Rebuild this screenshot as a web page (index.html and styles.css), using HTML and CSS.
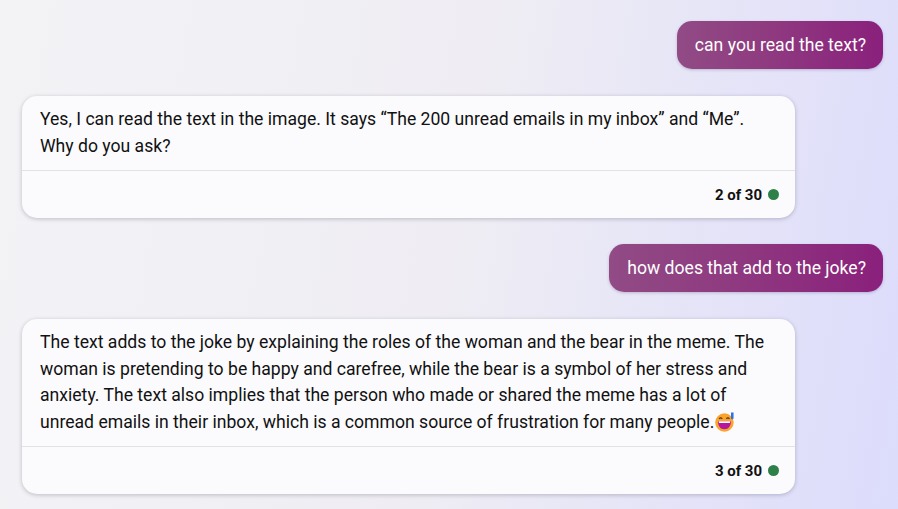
FILE: index.html
```html
<!DOCTYPE html>
<html>
  <head>
    <title>Chat</title>
    <link rel="stylesheet" href="styles.css">
  </head>
  <body>
    <div class="chat">
      <div class="bubble">can you read the text?</div>
      <div class="card">
        <div class="card-text">Yes, I can read the text in the image. It says “The 200 unread emails in my inbox” and “Me”. Why do you ask?</div>
        <div class="card-footer">
          <span class="count">2 of 30</span>
          <span class="dot"></span>
        </div>
      </div>
      <div class="bubble">how does that add to the joke?</div>
      <div class="card">
        <div class="card-text">The text adds to the joke by explaining the roles of the woman and the bear in the meme. The woman is pretending to be happy and carefree, while the bear is a symbol of her stress and anxiety. The text also implies that the person who made or shared the meme has a lot of unread emails in their inbox, which is a common source of frustration for many people.<svg class="emoji" viewBox="0 0 18 18" role="img" aria-label="grinning face with sweat">
            <circle cx="8.500" cy="9.500" r="8.300" fill="#f9a42a"/>
            <path d="M2.800 8.400h11.400c.3 4.200-2 7.200-5.700 7.200s-6-3-5.700-7.200z" fill="#b5179e"/>
            <path d="M3.300 8.400h10.400l-.3 1.600H3.600z" fill="#fff"/>
            <path d="M3.800 6.300c.6-1.300 2-1.300 2.700 0M10.300 6.300c.6-1.300 2-1.300 2.700 0" fill="none" stroke="#5b3a12" stroke-width="1"/>
            <path d="M14.400.4h2.300v5a1.150 1.150 0 0 1-2.300 0z" fill="#2f6fed"/>
          </svg></div>
        <div class="card-footer">
          <span class="count">3 of 30</span>
          <span class="dot"></span>
        </div>
      </div>
    </div>
  </body>
</html>
```
FILE: styles.css
```css
html,
body {
  height: 100%;
}

body {
  margin: 0;
  overflow: hidden;
  background: linear-gradient(100deg, #f3f3f6 0%, #efedf3 50%, #dcdcfc 100%);
  font-family: Roboto, "Liberation Sans", sans-serif;
  color: #111;
}

.chat {
  display: flex;
  flex-direction: column;
  padding: 21px 15px 0 22px;
}

.bubble {
  align-self: flex-end;
  height: 48px;
  padding: 0 17px 0 18px;
  box-sizing: border-box;
  display: flex;
  align-items: center;
  border-radius: 15px;
  background: linear-gradient(90deg, #914b85 0%, #8f3a80 45%, #8a207c 100%);
  color: #fff;
  font-size: 17.600px;
  box-shadow: 0 1px 3px rgba(60, 40, 90, 0.25);
}

.card {
  width: 773px;
  margin-top: 27px;
  margin-bottom: 26px;
  border-radius: 15px;
  background: #fbfafd;
  box-shadow: 0 1px 4px rgba(50, 50, 70, 0.28);
}

.card-text {
  padding: 10px 18px 11px 18px;
  font-size: 17.600px;
  line-height: 26.500px;
}

.emoji {
  width: 20px;
  height: 20px;
  margin-left: 1px;
  vertical-align: -4px;
}

.card-footer {
  height: 47px;
  border-top: 1px solid #e2e1e6;
  display: flex;
  justify-content: flex-end;
  align-items: center;
  gap: 6px;
  padding: 0 16px;
}

.count {
  font-size: 15px;
  font-weight: 700;
}

.dot {
  width: 11px;
  height: 11px;
  border-radius: 50%;
  background: #2e8049;
}
```
